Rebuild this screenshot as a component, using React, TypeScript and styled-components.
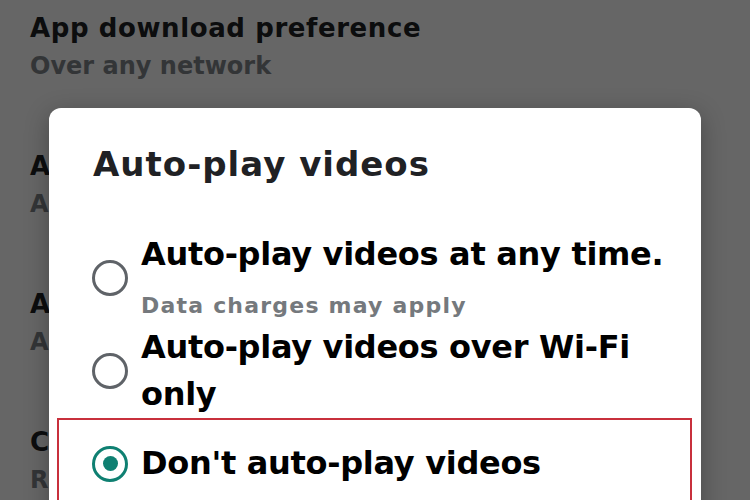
import React, { useState } from 'react';
import styled, { createGlobalStyle } from 'styled-components';

const GlobalStyle = createGlobalStyle`
  * {
    margin: 0;
    padding: 0;
    box-sizing: border-box;
  }
  body {
    font-family: "DejaVu Sans", "Open Sans", sans-serif;
    background: #ffffff;
    overflow: hidden;
  }
`;

const Screen = styled.div`
  position: relative;
  width: 750px;
  height: 500px;
  overflow: hidden;
  background: #ffffff;
`;

const SettingsList = styled.div`
  display: flex;
  flex-direction: column;
  gap: 62px;
  padding: 9px 30px 0;
`;

const SettingRow = styled.div`
  display: flex;
  flex-direction: column;
`;

const SettingTitle = styled.div`
  font-size: 26px;
  line-height: 38px;
  font-weight: 700;
  letter-spacing: 0.6px;
  color: #202124;
  white-space: nowrap;
`;

const SettingValue = styled.div`
  font-size: 24px;
  line-height: 38px;
  font-weight: 700;
  color: #80868b;
  white-space: nowrap;
`;

// dims everything underneath the dialog
const Scrim = styled.div`
  position: absolute;
  inset: 0;
  background: rgba(0, 0, 0, 0.6);
`;

const Dialog = styled.div`
  position: absolute;
  left: 49px;
  top: 108px;
  width: 652px;
  height: 460px;
  background: #ffffff;
  border-radius: 12px;
  box-shadow: 0 6px 24px rgba(0, 0, 0, 0.3);
  padding-top: 35px;
`;

const DialogTitle = styled.h2`
  font-size: 34px;
  line-height: 43px;
  font-weight: 700;
  letter-spacing: 1px;
  color: #202124;
  padding-left: 44px;
  margin-bottom: 45px;
`;

const Options = styled.div`
  display: flex;
  flex-direction: column;
  padding: 0 9px 0 8px;
`;

const Option = styled.label<{ $highlight?: boolean }>`
  display: flex;
  align-items: center;
  gap: 13px;
  padding: ${(p) => (p.$highlight ? '20px 0 40px 33px' : '0 0 0 35px')};
  border: ${(p) => (p.$highlight ? '2px solid #c8303c' : 'none')};
  cursor: pointer;
`;

const Radio = styled.span<{ $checked: boolean }>`
  flex: none;
  width: 36px;
  height: 36px;
  border-radius: 50%;
  border: 3.5px solid ${(p) => (p.$checked ? '#0f8072' : '#5f6368')};
  display: flex;
  align-items: center;
  justify-content: center;

  &::after {
    content: '';
    width: 15px;
    height: 15px;
    border-radius: 50%;
    background: #0f8072;
    display: ${(p) => (p.$checked ? 'block' : 'none')};
  }
`;

const OptionText = styled.div`
  flex: 1;
  display: flex;
  flex-direction: column;
`;

const OptionLabel = styled.div`
  font-size: 32px;
  line-height: 47px;
  font-weight: 700;
  letter-spacing: -0.3px;
  color: #000000;
`;

const OptionHint = styled.div`
  font-size: 22px;
  line-height: 36px;
  font-weight: 700;
  letter-spacing: 1.2px;
  color: #75797d;
  margin-top: 10px;
`;

const settings = [
  { title: 'App download preference', value: 'Over any network' },
  { title: 'Auto-update apps', value: 'Auto-update apps over Wi-Fi only' },
  { title: 'Auto-play videos', value: 'Auto-play videos over Wi-Fi only' },
  { title: 'Clear device search history', value: 'Remove searches you have performed' },
];

const choices = [
  { id: 'any', label: 'Auto-play videos at any time.', hint: 'Data charges may apply' },
  { id: 'wifi', label: 'Auto-play videos over Wi-Fi only' },
  { id: 'never', label: "Don't auto-play videos" },
];

const App: React.FC = () => {
  const [selected, setSelected] = useState('never');

  return (
    <Screen>
      <GlobalStyle />
      <SettingsList>
        {settings.map((s) => (
          <SettingRow key={s.title}>
            <SettingTitle>{s.title}</SettingTitle>
            <SettingValue>{s.value}</SettingValue>
          </SettingRow>
        ))}
      </SettingsList>
      <Scrim />
      <Dialog>
        <DialogTitle>Auto-play videos</DialogTitle>
        <Options>
          {choices.map((c) => (
            <Option
              key={c.id}
              $highlight={c.id === selected}
              onClick={() => setSelected(c.id)}
            >
              <Radio $checked={c.id === selected} />
              <OptionText>
                <OptionLabel>{c.label}</OptionLabel>
                {c.hint && <OptionHint>{c.hint}</OptionHint>}
              </OptionText>
            </Option>
          ))}
        </Options>
      </Dialog>
    </Screen>
  );
};

export default App;
